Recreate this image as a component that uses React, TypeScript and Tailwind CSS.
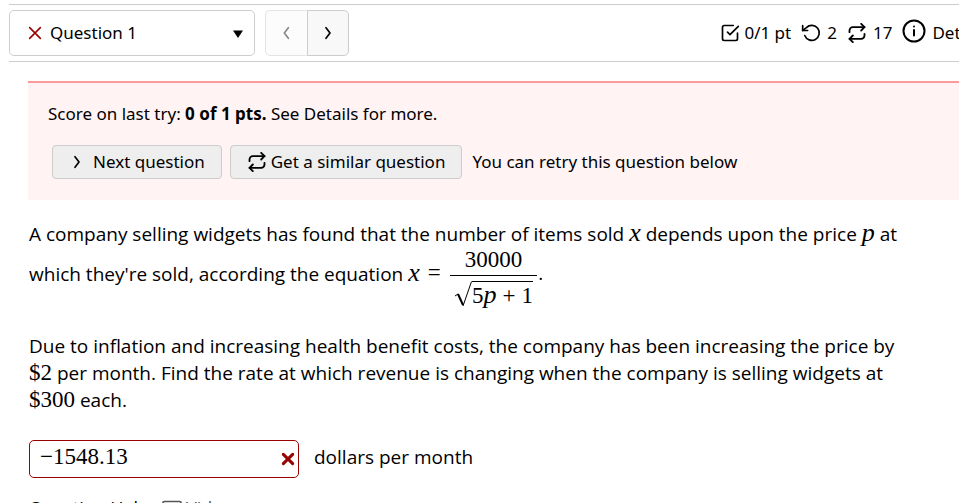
import type { ReactNode } from "react";

function Num({ children }: { children: ReactNode }) {
    return <span className="font-['Liberation_Serif',serif] text-[23px] leading-none">{children}</span>;
}

function Var({ children }: { children: ReactNode }) {
    return <i className="font-['Liberation_Serif',serif] text-[26px] leading-none">{children}</i>;
}

function Stroke({ className, width = 2, children }: { className: string; width?: number; children: ReactNode }) {
    return (
        <svg viewBox="0 0 24 24" className={className} fill="none" stroke="currentColor" strokeWidth={width} strokeLinecap="round" strokeLinejoin="round" aria-hidden="true">
            {children}
        </svg>
    );
}

function RepeatIcon() {
    return (
        <Stroke className="size-5 shrink-0" width={2.2}>
            <path d="M17 1l4 4-4 4" />
            <path d="M3 11V9a4 4 0 0 1 4-4h14" />
            <path d="M7 23l-4-4 4-4" />
            <path d="M21 13v2a4 4 0 0 1-4 4H3" />
        </Stroke>
    );
}

function Chevron({ left = false }: { left?: boolean }) {
    return (
        <Stroke className="size-4 shrink-0" width={2.5}>
            {left ? <path d="M14 4l-6 8 6 8" /> : <path d="M9 4l6 8-6 8" />}
        </Stroke>
    );
}

function Header() {
    return (
        <header className="ml-[9px] mt-1 flex items-center overflow-hidden border-y border-[#ccc] py-[5px]">
            <div className="relative w-[246px] shrink-0">
                <select aria-label="Question" className="block h-[46px] w-full appearance-none rounded-[5px] border border-[#ccc] bg-white pl-10">
                    <option>Question 1</option>
                </select>
                <Stroke className="pointer-events-none absolute left-[18px] top-[15px] size-4 text-[#990000]" width={2.4}>
                    <path d="M4 4l16 16M20 4L4 20" />
                </Stroke>
                <svg viewBox="0 0 10 8" className="pointer-events-none absolute right-3 top-5 h-2 w-2.5" aria-hidden="true">
                    <path d="M0 0.5h10L5 8z" />
                </svg>
            </div>
            <nav className="ml-2.5 flex shrink-0" aria-label="Question navigation">
                <button disabled aria-label="Previous question" className="flex h-[46px] w-[42px] items-center justify-center rounded-l-[5px] border border-r-0 border-[#e4e4e4] bg-[#fcfcfc] text-[#888]">
                    <Chevron left />
                </button>
                <button aria-label="Next question" className="flex h-[46px] w-[42px] items-center justify-center rounded-r-[5px] border border-[#ccc] bg-[#f8f8f8]">
                    <Chevron />
                </button>
            </nav>
            <div className="-mr-7 ml-auto flex shrink-0 items-center gap-2.5 whitespace-nowrap">
                <span className="flex items-center gap-1">
                    <Stroke className="size-5">
                        <path d="M9 11l3 3L22 4" />
                        <path d="M21 12v7a2 2 0 0 1-2 2H5a2 2 0 0 1-2-2V5a2 2 0 0 1 2-2h11" />
                    </Stroke>
                    0/1 pt
                </span>
                <span className="flex items-center gap-1.5">
                    <Stroke className="size-5">
                        <path d="M2 3v6h6" />
                        <path d="M4.5 15a9 9 0 1 0 2-9.500L2 9" />
                    </Stroke>
                    2
                </span>
                <span className="flex items-center gap-1.5">
                    <RepeatIcon />
                    17
                </span>
                <button className="flex items-center gap-1.5">
                    <Stroke className="-mt-1 size-6">
                        <circle cx="12" cy="12" r="10.500" />
                        <path d="M12 11v5.500M12 7.500v.1" />
                    </Stroke>
                    Details
                </button>
            </div>
        </header>
    );
}

function ScorePanel() {
    return (
        <section className="ml-7 mt-[19px] border-t-2 border-[#ff9999] bg-[#fff3f3] px-5 pb-[21px] pt-[17px]">
            <p className="leading-[27px]">
                Score on last try: <b>0 of 1 pts.</b> See Details for more.
            </p>
            <div className="ml-1 mt-[18px] flex items-center whitespace-nowrap">
                <button className="flex h-[34px] items-center gap-2 rounded border border-[#ccc] bg-[#eee] px-4">
                    <Chevron />
                    Next question
                </button>
                <button className="ml-2 flex h-[34px] items-center gap-1 rounded border border-[#ccc] bg-[#eee] px-4">
                    <RepeatIcon />
                    Get a similar question
                </button>
                <span className="ml-2.5">You can retry this question below</span>
            </div>
        </section>
    );
}

function Fraction() {
    return (
        <span className="flex flex-col items-center leading-none">
            <span className="flex px-4 pb-1">
                <Num>30000</Num>
            </span>
            <span className="flex border-t border-black px-1 pt-[5px]">
                <svg viewBox="0 0 18 26" className="h-[26px] w-[18px]" fill="none" stroke="black" aria-hidden="true">
                    <path d="M1 15l3-2" strokeWidth="1" />
                    <path d="M4 13l5 11" strokeWidth="2" />
                    <path d="M9 25L17.500 0.500" strokeWidth="1" />
                </svg>
                <span className="flex items-baseline gap-1.5 border-t border-black">
                    <span className="flex items-baseline">
                        <Num>5</Num>
                        <Var>p</Var>
                    </span>
                    <Num>+</Num>
                    <Num>1</Num>
                </span>
            </span>
        </span>
    );
}

export default function App() {
    return (
        <div className="flow-root h-screen overflow-hidden bg-white font-['Noto_Sans',sans-serif] text-[17px] text-black">
            <Header />
            <ScorePanel />
            <main className="ml-[29px] mr-13 mt-5 font-['Open_Sans',sans-serif] text-[19px]">
                <div className="leading-[27px]">
                    <p>
                        A company selling widgets has found that the number of items sold <Var>x</Var> depends upon the price <Var>p</Var> at
                    </p>
                    <div className="flex items-start">
                        <span className="mt-3">
                            which they're sold, according the equation <Var>x</Var>
                        </span>
                        <span className="mx-2 mt-3">
                            <Num>=</Num>
                        </span>
                        <Fraction />
                        <span className="mt-3">.</span>
                    </div>
                </div>
                <p className="mt-[25px] leading-[27px]">
                    Due to inflation and increasing health benefit costs, the company has been increasing the price by <Num>$2</Num> per month. Find the rate at which revenue is changing when the company is selling widgets at <Num>$300</Num> each.
                </p>
                <div className="mt-[26px] flex items-center">
                    <div className="relative w-[270px]">
                        <input
                            id="answer"
                            defaultValue="−1548.13"
                            className="block h-[38px] w-full rounded-[5px] border border-[#990000] bg-white pb-1 pl-2.5 pr-8 font-['Liberation_Serif',serif] text-[23px]"
                        />
                        <Stroke className="pointer-events-none absolute right-[3px] top-[11px] size-4 text-[#990000]" width={4.5}>
                            <path d="M5 5l14 14M19 5L5 19" />
                        </Stroke>
                    </div>
                    <label htmlFor="answer" className="ml-[15px] pb-1">dollars per month</label>
                </div>
                <div className="mt-[17px] flex items-center gap-2 text-[18px]">
                    Question Help:
                    <a href="#video" className="flex items-center gap-1 text-[#555]">
                        <Stroke className="size-5">
                            <rect x="1" y="3" width="22" height="18" rx="2" />
                            <path d="M10 8l6 4-6 4z" />
                        </Stroke>
                        Video
                    </a>
                </div>
            </main>
        </div>
    );
}
